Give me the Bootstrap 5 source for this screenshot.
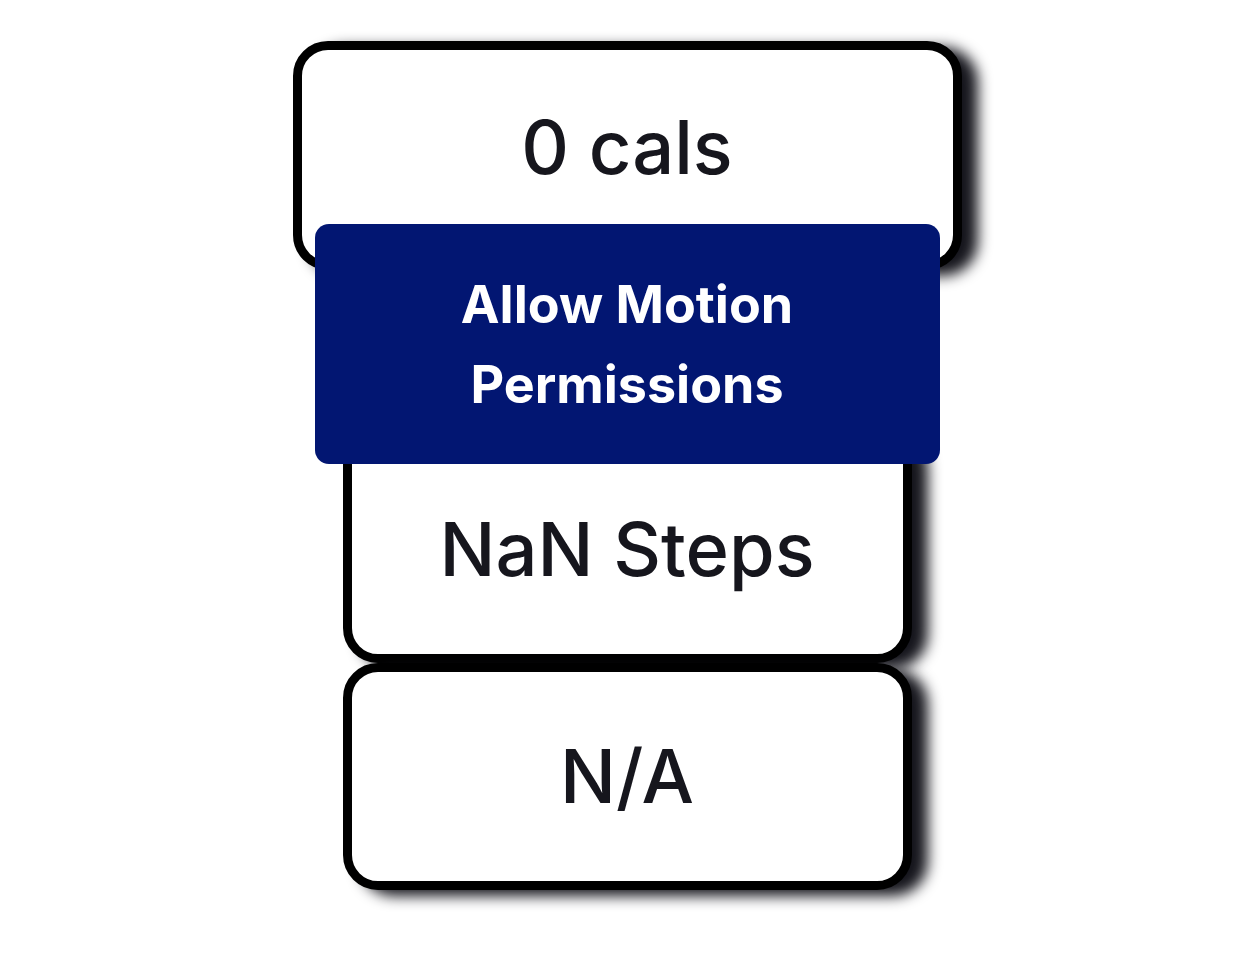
<!DOCTYPE html>
<html lang="en">
<head>
<meta charset="utf-8">
<meta name="viewport" content="width=device-width, initial-scale=1">
<title>Activity</title>
<link href="https://cdn.jsdelivr.net/npm/bootstrap@5.3.0/dist/css/bootstrap.min.css" rel="stylesheet">
<style>
  body { font-family: Inter, "Liberation Sans", sans-serif; color: #16161d; background: #fff; }
  .tracker { padding-top: 41px; padding-bottom: 48px; }
  .stat-box {
    width: 100%;
    max-width: 569px;
    padding: 44px 16px 45px;
    border: 9px solid #000;
    border-radius: 35px;
    background: #fff;
    box-shadow: 16px 6px 14px #16161d;
    font-size: 74px;
    font-weight: 500;
    line-height: 120px;
  }
  .stat-wide { max-width: 669px; padding: 37px 16px 54px; }
  .stat-steps { padding-top: 53px; }
  .permit-btn {
    width: 100%;
    max-width: 625px;
    margin: -46px 0 -37px;
    padding: 41px 120px 39px;
    border: 0;
    border-radius: 14px;
    background: #021672;
    color: #fff;
    font-size: 52px;
    font-weight: 700;
    line-height: 80px;
  }
  .permit-btn:hover { background: #03209c; color: #fff; }
</style>
</head>
<body>
<main class="tracker container-fluid d-flex flex-column align-items-center text-center">
  <div class="stat-box stat-wide">0 cals</div>
  <button type="button" class="btn permit-btn position-relative z-1">Allow Motion Permissions</button>
  <div class="stat-box stat-steps">NaN Steps</div>
  <div class="stat-box">N/A</div>
</main>
<script src="https://cdn.jsdelivr.net/npm/bootstrap@5.3.0/dist/js/bootstrap.bundle.min.js"></script>
</body>
</html>
